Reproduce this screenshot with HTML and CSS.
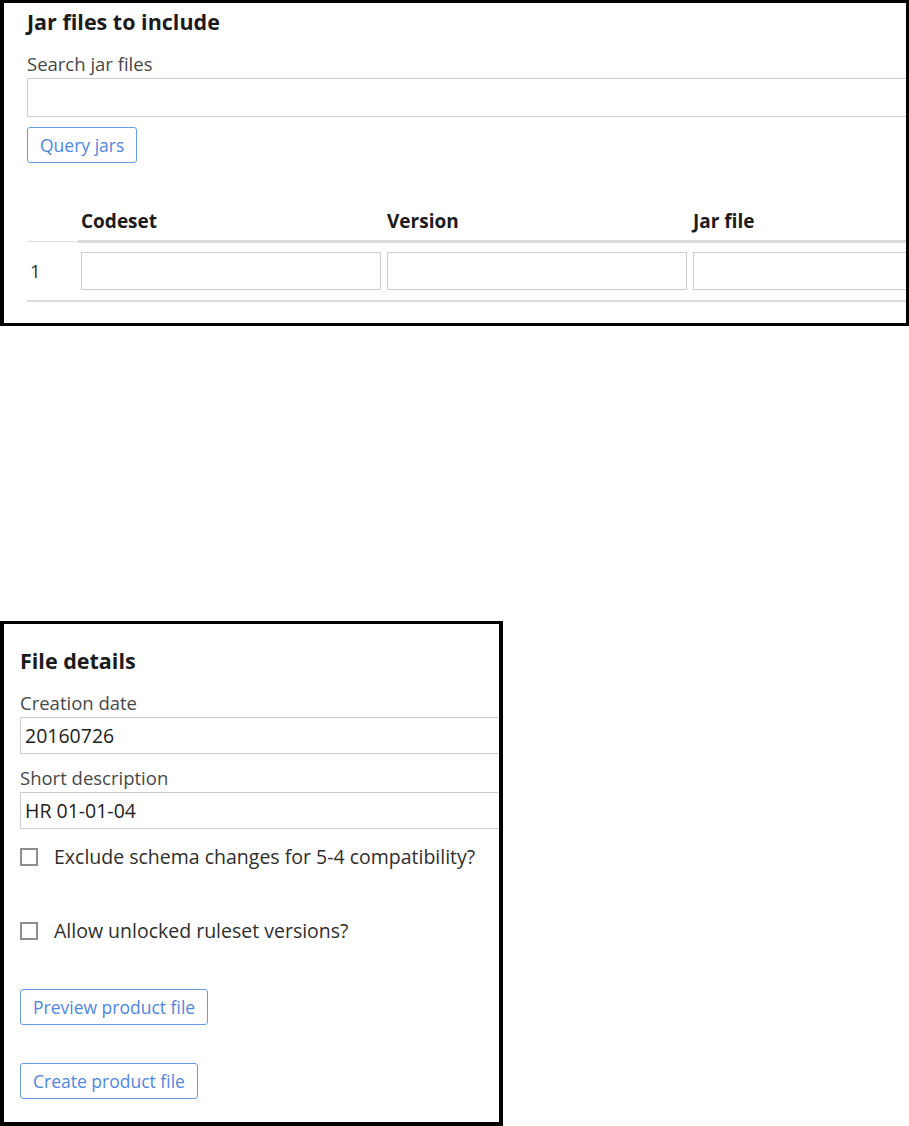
FILE: index.html
```html
<!DOCTYPE html>
<html lang="en">
<head>
<meta charset="UTF-8">
<meta name="viewport" content="width=device-width, initial-scale=1.0">
<title>Product rule</title>
<link rel="stylesheet" href="styles.css">
</head>
<body>
<section class="panel jar-panel">
  <h2 class="panel-title">Jar files to include</h2>
  <label class="field-label" for="jar-search">Search jar files</label>
  <input class="text-field wide" id="jar-search" type="text">
  <button class="link-button">Query jars</button>
  <table class="jar-table">
    <colgroup>
      <col class="col-num">
      <col class="col-field">
      <col class="col-field">
      <col class="col-field">
    </colgroup>
    <thead>
      <tr>
        <th class="num-cell"></th>
        <th>Codeset</th>
        <th>Version</th>
        <th>Jar file</th>
      </tr>
    </thead>
    <tbody>
      <tr>
        <td class="num-cell">1</td>
        <td><input class="text-field" type="text"></td>
        <td><input class="text-field" type="text"></td>
        <td><input class="text-field" type="text"></td>
      </tr>
    </tbody>
  </table>
</section>

<section class="panel details-panel">
  <h2 class="panel-title">File details</h2>
  <label class="field-label" for="creation-date">Creation date</label>
  <input class="text-field wide short" id="creation-date" type="text" value="20160726">
  <label class="field-label" for="short-desc">Short description</label>
  <input class="text-field wide short" id="short-desc" type="text" value="HR 01-01-04">
  <label class="check-row">
    <input type="checkbox" class="check-box">
    <span>Exclude schema changes for 5-4 compatibility?</span>
  </label>
  <label class="check-row second">
    <input type="checkbox" class="check-box">
    <span>Allow unlocked ruleset versions?</span>
  </label>
  <button class="link-button preview">Preview product file</button>
  <button class="link-button create">Create product file</button>
</section>
</body>
</html>
```

FILE: styles.css
```css
body {
  margin: 0;
  background: #fff;
  font-family: "Open Sans", "Liberation Sans", sans-serif;
  color: #333;
}

.panel {
  box-sizing: border-box;
  border: 3px solid #000;
  border-left-width: 4px;
  overflow: hidden;
}

.jar-panel {
  width: 909px;
  height: 326px;
  padding: 4px 0 0 23px;
}

.details-panel {
  width: 503px;
  height: 505px;
  margin-top: 295px;
  padding: 22px 0 0 16px;
  border-right-width: 4px;
  border-bottom-width: 4px;
}

.panel-title {
  margin: 0 0 15px;
  font-size: 21.5px;
  line-height: 30px;
  font-weight: 700;
  color: #1b1b1b;
}

.field-label {
  display: block;
  font-size: 18.5px;
  line-height: 24px;
  color: #484848;
  margin-bottom: 2px;
}

.text-field {
  display: block;
  box-sizing: border-box;
  height: 39px;
  margin: 0;
  padding: 0 4px;
  border: 1px solid #cdcdcd;
  border-radius: 0;
  background: #fff;
  font: 19.5px "Open Sans", "Liberation Sans", sans-serif;
  color: #222;
  outline: none;
}

.wide {
  width: 900px;
}

.short {
  height: 37px;
  margin-bottom: 12px;
}

.link-button {
  display: block;
  box-sizing: border-box;
  height: 36px;
  margin: 10px 0 0;
  padding: 0 12px;
  border: 1px solid #6a9be9;
  border-radius: 3px;
  background: #fff;
  color: #4f86e1;
  font: 17.5px "Open Sans", "Liberation Sans", sans-serif;
}

/* jar table */
.jar-table {
  border-collapse: collapse;
  table-layout: fixed;
  width: 969px;
  margin-top: 46px;
}

.col-num {
  width: 51px;
}

.col-field {
  width: 306px;
}

.jar-table th {
  text-align: left;
  font-size: 19px;
  line-height: 24px;
  font-weight: 700;
  color: #1b1b1b;
  padding: 0 3px 7px;
  border-bottom: 3px solid #dcdcdc;
}

.jar-table th.num-cell {
  border-bottom-width: 1px;
}

.jar-table td {
  padding: 9px 3px 10px;
  border-bottom: 2px solid #dcdcdc;
}

.jar-table td.num-cell {
  font-size: 18.5px;
  color: #333;
}

.jar-table .text-field {
  width: 100%;
  height: 38px;
}

/* checkboxes */
.check-row {
  display: flex;
  align-items: center;
  gap: 16px;
  margin-top: 16px;
  font-size: 19.5px;
  line-height: 24px;
  color: #2e2e2e;
}

.check-row.second {
  margin-top: 50px;
}

.check-box {
  appearance: none;
  -webkit-appearance: none;
  box-sizing: border-box;
  width: 18px;
  height: 18px;
  margin: 0;
  border: 2px solid #8e8e8e;
  background: #fff;
}

.preview {
  margin-top: 46px;
}

.create {
  margin-top: 38px;
}
```
